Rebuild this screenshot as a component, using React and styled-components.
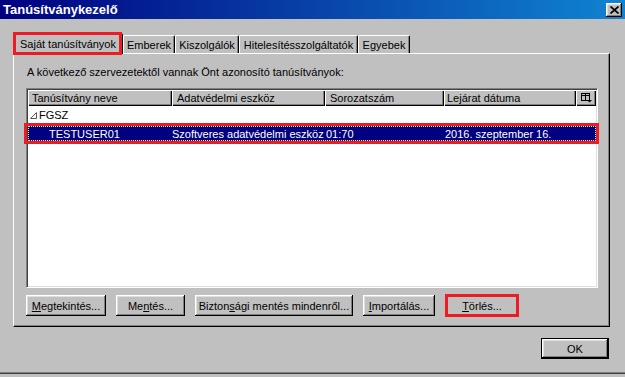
import React from 'react';
import styled, { createGlobalStyle } from 'styled-components';

const GlobalStyle = createGlobalStyle`
  html, body {
    margin: 0;
    padding: 0;
    background: #c0c0c0;
  }
  body {
    font-family: "Liberation Sans", Arial, sans-serif;
    font-size: 11px;
    color: #000;
  }
  * { box-sizing: border-box; }
`;

const raised = `
  box-shadow: inset -1px -1px #000, inset 1px 1px #fff, inset -2px -2px #808080, inset 2px 2px #dfdfdf;
`;

const Window = styled.div`
  width: 625px;
  height: 377px;
  display: flex;
  flex-direction: column;
  background: #c0c0c0;
  padding-bottom: 3px;
  overflow: hidden;
`;

const TitleBar = styled.div`
  height: 19px;
  flex-shrink: 0;
  display: flex;
  align-items: center;
  justify-content: space-between;
  padding: 0 3px 0 3px;
  background: linear-gradient(to right, #000080, #1084d0);
  color: #fff;
  font-weight: bold;
  font-size: 13px;
`;

const CloseButton = styled.div`
  width: 16px;
  height: 14px;
  background: #c0c0c0;
  display: flex;
  align-items: center;
  justify-content: center;
  ${raised}
`;

const Body = styled.div`
  flex: 1;
  display: flex;
  flex-direction: column;
  padding: 14px 15px 0 13px;
  box-shadow: inset 0 -1px #404040, inset 0 -2px #808080;
`;

const TabStrip = styled.div`
  display: flex;
  align-items: flex-end;
  height: 20px;
  position: relative;
  z-index: 1;
`;

const Tab = styled.div`
  position: relative;
  width: ${p => p.$w}px;
  height: ${p => (p.$active ? 21 : 18)}px;
  margin-bottom: ${p => (p.$active ? -1 : 0)}px;
  background: #c0c0c0;
  border-top: 1px solid #fff;
  border-left: 1px solid #fff;
  border-right: 1px solid #000;
  border-radius: 2px 2px 0 0;
  box-shadow: inset -1px 0 #808080;
  display: flex;
  align-items: center;
  justify-content: center;
  white-space: nowrap;

  ${p => p.$marked && `
    &::after {
      content: '';
      position: absolute;
      top: -2px;
      left: -1px;
      right: 0;
      bottom: -1px;
      border: 3px solid #ed1c24;
    }
  `}
`;

const Panel = styled.div`
  width: 597px;
  height: 274px;
  border-top: 1px solid #fff;
  border-left: 1px solid #fff;
  border-right: 1px solid #000;
  border-bottom: 1px solid #000;
  box-shadow: inset -1px -1px #808080;
  padding: 12px 0 0 12px;
  display: flex;
  flex-direction: column;
`;

const Label = styled.div`
  height: 13px;
  line-height: 13px;
  padding-left: 1px;
`;

const ListBox = styled.div`
  margin-top: 9px;
  width: 572px;
  height: 200px;
  background: #fff;
  border-top: 1px solid #808080;
  border-left: 1px solid #808080;
  border-bottom: 1px solid #fff;
  border-right: 1px solid #fff;
  box-shadow: inset 1px 1px #404040, inset -1px -1px #dfdfdf;
  padding: 1px;
`;

const columns = '144px 153px 119px 132px 1fr';

const HeaderRow = styled.div`
  display: grid;
  grid-template-columns: ${columns};
  height: 16px;
`;

const HeaderCell = styled.div`
  background: #c0c0c0;
  box-shadow: inset 1px 1px #fff, inset -1px -1px #000, inset -2px -2px #808080;
  padding-left: ${p => p.$pad ?? 5}px;
  line-height: 16px;
  white-space: nowrap;
  overflow: hidden;
  display: flex;
  align-items: center;
  justify-content: ${p => (p.$center ? 'center' : 'flex-start')};
`;

const GroupRow = styled.div`
  height: 18px;
  display: flex;
  align-items: center;
  padding-left: 2px;
  gap: 2px;
`;

const DataRow = styled.div`
  position: relative;
  display: grid;
  grid-template-columns: ${columns};
  height: 19px;
  align-items: center;
  background: ${p => (p.$selected ? '#000080' : 'transparent')};
  color: ${p => (p.$selected ? '#fff' : '#000')};

  &::before {
    content: '';
    position: absolute;
    inset: 2px 0 2px 0;
    border: 1px dotted #e8e8b0;
  }

  ${p => p.$marked && `
    &::after {
      content: '';
      position: absolute;
      top: -1px;
      bottom: -1px;
      left: -4px;
      right: -3px;
      border: 3px solid #ed1c24;
    }
  `}
`;

const Cell = styled.div`
  padding-left: ${p => p.$pad ?? 1}px;
  white-space: nowrap;
  overflow: hidden;
`;

const ButtonRow = styled.div`
  display: flex;
  gap: 10px;
  margin-top: 7px;
`;

const Button = styled.div`
  position: relative;
  width: ${p => p.$w}px;
  height: 21px;
  background: #c0c0c0;
  display: flex;
  align-items: center;
  justify-content: center;
  white-space: nowrap;
  ${raised}

  ${p => p.$default && `
    border: 1px solid #000;
  `}

  ${p => p.$marked && `
    &::after {
      content: '';
      position: absolute;
      inset: -1px 0 -1px 0;
      border: 3px solid #ed1c24;
    }
  `}
`;

const Key = styled.span`
  text-decoration: underline;
`;

const Footer = styled.div`
  display: flex;
  justify-content: flex-end;
  margin-top: 11px;
  padding-right: 1px;
`;

const CloseIcon = () => (
  <svg width="9" height="8" viewBox="0 0 9 8">
    <path d="M0.5 0.5 L8.5 7.5 M8.5 0.5 L0.5 7.5" stroke="#000" strokeWidth="1.7" />
  </svg>
);

const ColumnsIcon = () => (
  <svg width="11" height="10" viewBox="0 0 11 10">
    <rect x="0.5" y="0.5" width="8" height="7" fill="none" stroke="#000" />
    <path d="M0.5 2.5 H8.5 M4.5 0.5 V7.5" stroke="#000" />
    <path d="M6 7 H11 L8.5 9.5 Z" fill="#000" />
  </svg>
);

const ExpandedIcon = () => (
  <svg width="7" height="7" viewBox="0 0 7 7">
    <polygon points="0.5,6.5 6.5,6.5 6.5,0.5" fill="#fff" stroke="#5a5a5a" />
  </svg>
);

const tabs = [
  { label: 'Saját tanúsítványok', w: 110, active: true },
  { label: 'Emberek', w: 52 },
  { label: 'Kiszolgálók', w: 64 },
  { label: 'Hitelesítésszolgáltatók', w: 119 },
  { label: 'Egyebek', w: 52 },
];

export default function App() {
  return (
    <>
      <GlobalStyle />
      <Window>
        <TitleBar>
          <span>Tanúsítványkezelő</span>
          <CloseButton>
            <CloseIcon />
          </CloseButton>
        </TitleBar>
        <Body>
          <TabStrip>
            {tabs.map(t => (
              <Tab key={t.label} $w={t.w} $active={t.active} $marked={t.active}>
                {t.label}
              </Tab>
            ))}
          </TabStrip>
          <Panel>
            <Label>A következő szervezetektől vannak Önt azonosító tanúsítványok:</Label>
            <ListBox>
              <HeaderRow>
                <HeaderCell $pad={4}>Tanúsítvány neve</HeaderCell>
                <HeaderCell>Adatvédelmi eszköz</HeaderCell>
                <HeaderCell>Sorozatszám</HeaderCell>
                <HeaderCell $pad={3}>Lejárat dátuma</HeaderCell>
                <HeaderCell $pad={0} $center>
                  <ColumnsIcon />
                </HeaderCell>
              </HeaderRow>
              <GroupRow>
                <ExpandedIcon />
                <span>FGSZ</span>
              </GroupRow>
              <DataRow $selected $marked>
                <Cell $pad={21}>TESTUSER01</Cell>
                <Cell $pad={0}>Szoftveres adatvédelmi eszköz</Cell>
                <Cell>01:70</Cell>
                <Cell>2016. szeptember 16.</Cell>
                <Cell />
              </DataRow>
            </ListBox>
            <ButtonRow>
              <Button $w={80}><Key>M</Key>egtekintés...</Button>
              <Button $w={69}>Me<Key>n</Key>tés...</Button>
              <Button $w={158}>Bizton<Key>s</Key>ági mentés mindenről...</Button>
              <Button $w={72}><Key>I</Key>mportálás...</Button>
              <Button $w={74} $marked><Key>T</Key>örlés...</Button>
            </ButtonRow>
          </Panel>
          <Footer>
            <Button $w={68} $default>OK</Button>
          </Footer>
        </Body>
      </Window>
    </>
  );
}
